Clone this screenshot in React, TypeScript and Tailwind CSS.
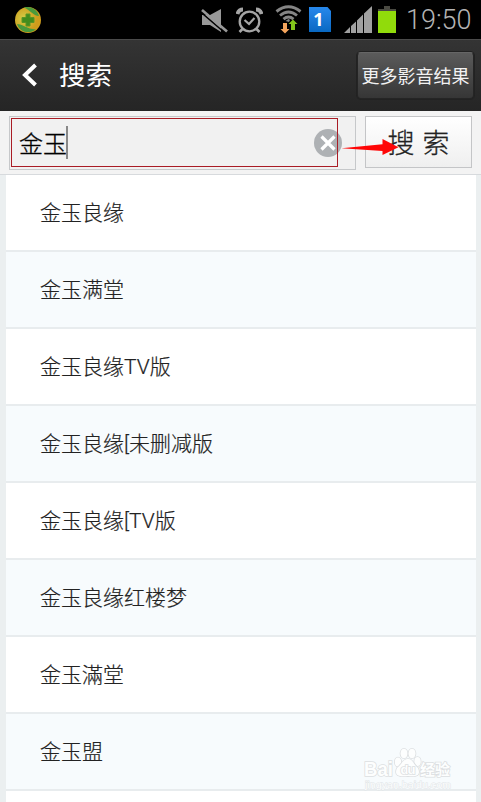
import React from "react";

const suggestions = [
  "金玉良缘",
  "金玉满堂",
  "金玉良缘TV版",
  "金玉良缘[未删减版",
  "金玉良缘[TV版",
  "金玉良缘红楼梦",
  "金玉滿堂",
  "金玉盟",
];

function StatusBar() {
  return (
    <div className="flex h-[39px] shrink-0 items-start bg-black">
      <svg className="ml-[14px] mt-[6px] size-7 shrink-0" viewBox="0 0 28 28">
        <defs>
          <radialGradient id="orb" cx="35%" cy="45%">
            <stop offset="0" stopColor="#d3cf48" />
            <stop offset="1" stopColor="#cf9c1c" />
          </radialGradient>
        </defs>
        <circle cx="14" cy="14" r="13" fill="url(#orb)" />
        <path d="M10 1.500C16 0 23 3 25 10C20 10 17 5 10 1.500ZM3 18C8 18 13 23 22 23.500C16 28 6 27 3 18Z" fill="#4a9a3c" />
        <path d="M12 8h4v3.500h4v5h-4v3.500h-4v-3.500h-4v-5h4z" fill="#438c1c" stroke="#5a9424" strokeLinejoin="round" />
      </svg>
      <svg className="ml-[159px] mt-[7px] h-[28px] w-[27px] shrink-0" viewBox="0 0 27 28">
        <path d="M1 8h8l11-6v23L9 18H1z" fill="#999" />
        <path d="M-1 4.500L24 26" stroke="#000" strokeWidth="1.500" />
        <path d="M1 3L26 24.500" stroke="#999" strokeWidth="2.600" />
      </svg>
      <svg className="ml-[8px] mt-[7px] h-[28px] w-[27px] shrink-0" viewBox="0 0 27 28" fill="none" stroke="#a5a5a5">
        <circle cx="13.500" cy="14.500" r="9.800" strokeWidth="2.300" />
        <path d="M8.500 13l4.500 4 5.500-6" strokeWidth="2.200" />
        <path d="M1.500 7Q2.500 2.500 7 2.500M20 2.500Q24.500 2.500 25.500 7" strokeWidth="3.800" />
        <path d="M6.500 22l-3 3M20.500 22l3 3" strokeWidth="2.600" />
      </svg>
      <svg className="ml-[12px] mt-[5px] h-[30px] w-[27px] shrink-0" viewBox="0 0 27 30">
        <g fill="none" stroke="#858585" strokeWidth="2.900">
          <path d="M1.500 6.500Q13.500 -3 25.500 6.500" />
          <path d="M5 10.500Q13.500 3.500 22 10.500" />
          <path d="M8.500 14.200Q13.500 10 18.500 14.200" />
        </g>
        <path d="M10.500 16L13.500 14L15 15L14 17Z" fill="#858585" />
        <path d="M8 18h4v6h2.500L10 28.500 5.500 24H8z" fill="#f5a55d" />
        <path d="M16 25h4v-6h2.500L18 14.500 13.500 19H16z" fill="#83c51a" />
      </svg>
      <div className="ml-[7px] mt-[7px] flex h-[25px] w-[22px] shrink-0 items-center justify-center bg-linear-to-b from-[#2788ec] to-[#0868c2] pr-[3px] font-['Noto_Sans',sans-serif] text-[18px] font-bold text-white [clip-path:polygon(0_0,84%_0,100%_16%,100%_100%,0_100%)]">
        1
      </div>
      <svg className="ml-[13px] mt-[6px] h-[27px] w-[28px] shrink-0" viewBox="0 0 28 27">
        <path d="M0 27L6 21V27ZM7 27V20L12 15.500V27ZM13 27V14.500L19 8.500V27ZM20 27V7.500L28 0V27Z" fill="#a0a0a0" />
      </svg>
      <svg className="ml-[6px] mt-[6px] h-[28px] w-[18px] shrink-0" viewBox="0 0 18 28">
        <path d="M6 0h6v4H6zM0 3h18v3H0z" fill="#4a4a42" />
        <path d="M0 5h18v22H0z" fill="#91db0b" />
      </svg>
      <span className="ml-[10px] mt-[4px] whitespace-nowrap font-['Roboto',sans-serif] text-[27px] font-light leading-[32px] text-[#b4b4b4]">
        19:50
      </span>
    </div>
  );
}

function Header() {
  return (
    <header className="flex h-[72px] shrink-0 items-center border-t border-[#4a4a4a] bg-linear-to-b from-[#343434] to-[#252525]">
      <svg className="mb-px ml-[21px] h-[24px] w-[17px]" viewBox="0 0 17 24" fill="none">
        <path d="M14.500 2L4 12l10.500 10" stroke="#fff" strokeWidth="4" />
      </svg>
      <h1 className="ml-[21px] pb-[3px] text-[26.500px] font-normal leading-[36px] text-white">搜索</h1>
      <button className="ml-auto mr-[7px] mt-[-1px] flex h-[47px] w-[117px] items-center justify-center whitespace-nowrap rounded-[4px] border border-[#252525] border-t-[#666] bg-linear-to-b from-[#5b5b5b] to-[#363636] text-[18px] text-[#f2f2f2] shadow-[0_0_0_1px_#222]">
        更多影音结果
      </button>
    </header>
  );
}

function SearchBar() {
  return (
    <div className="relative flex h-[64px] shrink-0 items-start border-b border-[#d7dadd] bg-[#f3f3f3] pl-[9px] pt-[5px]">
      <div className="h-[54px] w-[347px] border border-[#c6c8ca] bg-[#f1f1f1] p-px">
        <div className="flex h-[49px] w-[327px] items-center border border-[#a91c25] pl-[7px]">
          <span className="text-[24px] font-light leading-[34px] text-black [-webkit-text-stroke:0.3px_#000]">金玉</span>
          <span className="-ml-px h-[33px] w-[2px] bg-[#888]" />
        </div>
      </div>
      <button className="ml-[9px] h-[52px] w-[107px] whitespace-nowrap border border-[#c4c5c7] bg-linear-to-b from-white to-[#efefef] text-[27px] font-light text-[#222] [-webkit-text-stroke:0.3px_#222]">
        搜<span className="inline-block w-2" />索
      </button>
      <svg className="absolute left-[313px] top-[18px] h-[29px] w-[87px]" viewBox="0 0 87 29">
        <circle cx="15" cy="14" r="14" fill="#aeb1b4" />
        <path d="M8.500 7.500l13 13m0-13l-13 13" stroke="#fff" strokeWidth="3.200" />
        <path d="M24.500 0V29" stroke="#a91c25" />
        <path d="M28.500 19.300L69.500 15.300V10L85.500 18.300L69.500 26V22Z" fill="#ff0606" />
      </svg>
    </div>
  );
}

function Watermark() {
  return (
    <div className="absolute left-[363px] top-[746px] h-[46px] w-[94px]">
      <svg viewBox="0 0 94 46" className="h-full w-full" fill="#fdfefe" stroke="#dcdfe1" strokeWidth="1.600" paintOrder="stroke">
        <text x="1" y="30" fontFamily="Liberation Sans, sans-serif" fontSize="20" fontWeight="700" textLength="29" lengthAdjust="spacingAndGlyphs">Bai</text>
        <ellipse cx="35" cy="16" rx="3.200" ry="4.500" />
        <ellipse cx="41" cy="7.500" rx="3.500" ry="4.800" />
        <ellipse cx="49" cy="7.500" rx="3.500" ry="4.800" />
        <ellipse cx="54.500" cy="15.500" rx="3.200" ry="4.500" />
        <path d="M45 13C40 13 39 18 34 22C31 29 35 31 45 30C54 31 58 29 55 22C50 18 50 13 45 13Z" />
        <text x="37.500" y="27.500" fontFamily="Liberation Sans, sans-serif" fontSize="13" fontWeight="700" textLength="15">du</text>
        <text x="57" y="29" fontFamily="Noto Sans CJK SC, sans-serif" fontSize="15" fontWeight="700" textLength="30">经验</text>
        <text x="2" y="42" fontFamily="Liberation Sans, sans-serif" fontSize="9" strokeWidth=".8" stroke="#e0e4e6" textLength="86" lengthAdjust="spacingAndGlyphs">jingyan.baidu.com</text>
      </svg>
    </div>
  );
}

export default function App() {
  return (
    <main className="relative flex h-[802px] w-[481px] flex-col overflow-hidden bg-[#ebeff0] font-['Noto_Sans_CJK_SC',sans-serif]">
      <StatusBar />
      <Header />
      <SearchBar />
      <ul className="ml-[6px] w-[470px] bg-white">
        {suggestions.map((item, i) => (
          <li
            key={item}
            className={`flex h-[77px] items-center border-b-2 border-[#e8ecee] pl-[34px] pt-px font-['Roboto','Noto_Sans_CJK_SC',sans-serif] text-[21px] font-light leading-[30px] text-[#222] [-webkit-text-stroke:0.2px_#222] ${
              i % 2 ? "bg-[#f7fbfd]" : "bg-white"
            }`}
          >
            {item}
          </li>
        ))}
        <li className="h-[11px] bg-white" />
      </ul>
      <Watermark />
    </main>
  );
}
